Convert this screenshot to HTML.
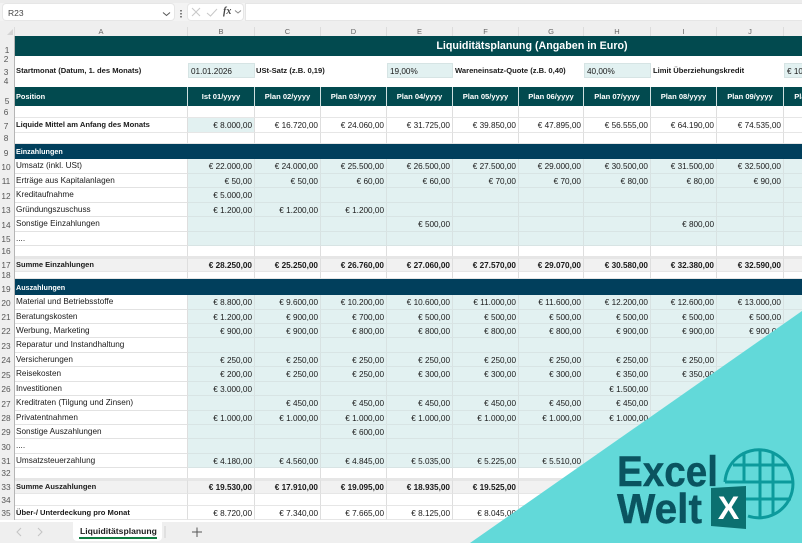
<!DOCTYPE html>
<html><head><meta charset="utf-8"><style>
html,body{margin:0;padding:0;width:802px;height:543px;overflow:hidden;background:#efefef;font-family:"Liberation Sans",sans-serif}
#w{position:absolute;left:0;top:27px;width:802px;height:495px;overflow:hidden;background:#fff}
table{border-collapse:separate;border-spacing:0;table-layout:fixed;width:851px;font-size:8.2px;color:#1a1a1a;filter:blur(.3px)}
td{padding:1px 2px 0 0;border-right:1px solid #dedede;border-bottom:1px solid #e6e6e6;box-sizing:border-box;line-height:7px;white-space:nowrap;text-align:right;vertical-align:middle;overflow:hidden}
td:first-child{background:#efefef;border-right:1px solid #b5b5b5;border-bottom:0;font-size:8.3px;color:#555;padding:0 2px 3px 0;vertical-align:bottom;text-align:center;font-weight:normal !important}
td:nth-child(2){text-align:left;padding:0 0 1px 1px;overflow:visible}
tr.h td{background:#efefef;border-right:1px solid #dcdcdc;border-bottom:0;color:#666;text-align:center;font-size:7.5px;padding:0}
tr.e td{background:#e2f1f1;border-right:1px solid #d8e2e2;border-bottom:1px solid #d8e4e4}
tr.e td:nth-child(2){background:#fff;border-bottom:1px solid #e2e2e2;border-right:1px solid #dedede}
tr.e td:first-child,tr.s td:first-child,tr.d td:first-child,tr.m td:first-child{background:#efefef;border-right:1px solid #b5b5b5;border-bottom:0;border-top:0;color:#555;font-size:8.3px}
tr.d td{background:#024a4f;color:#fff;font-weight:bold;text-align:center;border-right:1px solid #cfe0e0;border-bottom:0;padding:0;font-size:7.6px}
tr.d td:nth-child(2){text-align:left;padding-left:1px;border-right:1px solid #cfe0e0;font-size:7.4px}
tr.s td{background:#013f5c;color:#fff;font-weight:bold;border:0}
tr.s td:nth-child(2){border:0;font-size:7.2px;padding:0 0 0 1px}
tr.m td{background:#f1f1f1;font-weight:bold;border-top:2px solid #e6e6e6}
tr.m td:nth-child(2){font-size:7.5px}
td.lb{font-weight:bold;font-size:7.6px}
td.t{background:#e2f1f1 !important}
tr.r3 td{border-bottom:0;border-right:0;font-weight:bold;overflow:visible;text-align:left;padding:0 0 1px 1px;font-size:7.6px}
tr.r3 td:first-child{border-right:1px solid #b5b5b5;font-weight:normal;text-align:center;padding:0 2px 2px 0;font-size:8.3px}
tr.r3 td.t{font-weight:normal;border:1px solid #d6e4e4;padding:2px 0 0 2px;font-size:8.2px}
.a{position:absolute}
</style></head><body>
<div class="a" style="left:0;top:0;width:802px;height:3px;background:#ececec"></div>
<div class="a" style="left:0;top:3px;width:802px;height:18px;background:#f3f3f3"></div>
<div class="a" style="left:3px;top:4px;width:171px;height:16px;background:#fff;border-radius:3px;box-shadow:0 0 0 1px #e6e6e6"></div>
<div class="a" style="left:8px;top:8px;font-size:8.5px;color:#444">R23</div>
<svg class="a" style="left:160px;top:8px" width="90" height="18" fill="none">
<path d="M3 4.500L6.500 7.500L10 4.500" stroke="#555" stroke-width="1"/>
<path d="M21 2v1.500M21 5v1.500M21 8v1.500" stroke="#444" stroke-width="1.300"/>
</svg>
<div class="a" style="left:188px;top:4px;width:55px;height:16px;background:#fff;border-radius:3px;box-shadow:0 0 0 1px #e6e6e6"></div>
<svg class="a" style="left:188px;top:4px" width="56" height="16" fill="none">
<path d="M4 4L12 12M12 4L4 12" stroke="#c8c8c8" stroke-width="1"/>
<path d="M19 9L22.500 12L29 5" stroke="#c8c8c8" stroke-width="1"/>
<path d="M47 6.500L50 9L53 6.500" stroke="#888" stroke-width="1"/>
</svg>
<div class="a" style="left:223px;top:6px;font:italic bold 10px 'Liberation Serif',serif;color:#444">fx</div>
<div class="a" style="left:246px;top:4px;width:556px;height:16px;background:#fff;box-shadow:0 0 0 1px #e6e6e6"></div>
<div class="a" style="left:0;top:21px;width:802px;height:6px;background:#efefef"></div>
<div id="w"><table>
<colgroup><col style="width:15px"><col style="width:173px"><col style="width:67px"><col style="width:66px"><col style="width:66px"><col style="width:66px"><col style="width:66px"><col style="width:65px"><col style="width:67px"><col style="width:66px"><col style="width:67px"><col style="width:67px"></colgroup>
<tr class="h" style="height:9px"><td style="padding:0"></td><td style="text-align:center;padding:0">A</td><td>B</td><td>C</td><td>D</td><td>E</td><td>F</td><td>G</td><td>H</td><td>I</td><td>J</td><td></td></tr>
<tr class="d" style="height:20px"><td style="padding-bottom:2px">1</td><td colspan="11" style="background:#024a4f;text-align:left;border:0"></td></tr>
<tr class="r3" style="height:7px"><td style="padding-bottom:0">2</td><td colspan="11"></td></tr>
<tr class="r3" style="height:15px"><td>3</td><td>Startmonat (Datum, 1. des Monats)</td><td class="t">01.01.2026</td><td>USt-Satz (z.B. 0,19)</td><td></td><td class="t">19,00%</td><td style="padding-left:2px">Wareneinsatz-Quote (z.B. 0,40)</td><td></td><td class="t">40,00%</td><td style="padding-left:2px">Limit Überziehungskredit</td><td></td><td class="t">€ 10.000,00</td></tr>
<tr class="r3" style="height:9px"><td>4</td><td colspan="11"></td></tr>
<tr class="d" style="height:19px"><td style="padding-bottom:1px">5</td><td>Position</td><td>Ist 01/yyyy</td><td>Plan 02/yyyy</td><td>Plan 03/yyyy</td><td>Plan 04/yyyy</td><td>Plan 05/yyyy</td><td>Plan 06/yyyy</td><td>Plan 07/yyyy</td><td>Plan 08/yyyy</td><td>Plan 09/yyyy</td><td>Plan 10/yyyy</td></tr>
<tr style="height:12px"><td style="padding-bottom:2px">6</td><td></td><td></td><td></td><td></td><td></td><td></td><td></td><td></td><td></td><td></td><td></td></tr>
<tr style="height:15px"><td>7</td><td class="lb">Liquide Mittel am Anfang des Monats</td><td class="t">€ 8.000,00</td><td>€ 16.720,00</td><td>€ 24.060,00</td><td>€ 31.725,00</td><td>€ 39.850,00</td><td>€ 47.895,00</td><td>€ 56.555,00</td><td>€ 64.190,00</td><td>€ 74.535,00</td><td></td></tr>
<tr style="height:11px"><td style="padding-bottom:2px">8</td><td></td><td></td><td></td><td></td><td></td><td></td><td></td><td></td><td></td><td></td><td></td></tr>
<tr class="s" style="height:15px"><td style="padding-bottom:2px">9</td><td>Einzahlungen</td><td></td><td></td><td></td><td></td><td></td><td></td><td></td><td></td><td></td><td></td></tr>
<tr class="e" style="height:15px"><td>10</td><td>Umsatz (inkl. USt)</td><td>€ 22.000,00</td><td>€ 24.000,00</td><td>€ 25.500,00</td><td>€ 26.500,00</td><td>€ 27.500,00</td><td>€ 29.000,00</td><td>€ 30.500,00</td><td>€ 31.500,00</td><td>€ 32.500,00</td><td></td></tr>
<tr class="e" style="height:14px"><td>11</td><td>Erträge aus Kapitalanlagen</td><td>€ 50,00</td><td>€ 50,00</td><td>€ 60,00</td><td>€ 60,00</td><td>€ 70,00</td><td>€ 70,00</td><td>€ 80,00</td><td>€ 80,00</td><td>€ 90,00</td><td></td></tr>
<tr class="e" style="height:15px"><td>12</td><td>Kreditaufnahme</td><td>€ 5.000,00</td><td></td><td></td><td></td><td></td><td></td><td></td><td></td><td></td><td></td></tr>
<tr class="e" style="height:14px"><td>13</td><td>Gründungszuschuss</td><td>€ 1.200,00</td><td>€ 1.200,00</td><td>€ 1.200,00</td><td></td><td></td><td></td><td></td><td></td><td></td><td></td></tr>
<tr class="e" style="height:15px"><td>14</td><td>Sonstige Einzahlungen</td><td></td><td></td><td></td><td>€ 500,00</td><td></td><td></td><td></td><td>€ 800,00</td><td></td><td></td></tr>
<tr class="e" style="height:14px"><td>15</td><td>....</td><td></td><td></td><td></td><td></td><td></td><td></td><td></td><td></td><td></td><td></td></tr>
<tr style="height:11px"><td style="padding-bottom:2px">16</td><td></td><td></td><td></td><td></td><td></td><td></td><td></td><td></td><td></td><td></td><td></td></tr>
<tr class="m" style="height:15px"><td>17</td><td>Summe Einzahlungen</td><td>€ 28.250,00</td><td>€ 25.250,00</td><td>€ 26.760,00</td><td>€ 27.060,00</td><td>€ 27.570,00</td><td>€ 29.070,00</td><td>€ 30.580,00</td><td>€ 32.380,00</td><td>€ 32.590,00</td><td></td></tr>
<tr style="height:7px"><td style="padding-bottom:0">18</td><td></td><td></td><td></td><td></td><td></td><td></td><td></td><td></td><td></td><td></td><td></td></tr>
<tr class="s" style="height:16px"><td style="padding-bottom:2px">19</td><td>Auszahlungen</td><td></td><td></td><td></td><td></td><td></td><td></td><td></td><td></td><td></td><td></td></tr>
<tr class="e" style="height:15px"><td>20</td><td>Material und Betriebsstoffe</td><td>€ 8.800,00</td><td>€ 9.600,00</td><td>€ 10.200,00</td><td>€ 10.600,00</td><td>€ 11.000,00</td><td>€ 11.600,00</td><td>€ 12.200,00</td><td>€ 12.600,00</td><td>€ 13.000,00</td><td></td></tr>
<tr class="e" style="height:14px"><td>21</td><td>Beratungskosten</td><td>€ 1.200,00</td><td>€ 900,00</td><td>€ 700,00</td><td>€ 500,00</td><td>€ 500,00</td><td>€ 500,00</td><td>€ 500,00</td><td>€ 500,00</td><td>€ 500,00</td><td></td></tr>
<tr class="e" style="height:14px"><td>22</td><td>Werbung, Marketing</td><td>€ 900,00</td><td>€ 900,00</td><td>€ 800,00</td><td>€ 800,00</td><td>€ 800,00</td><td>€ 800,00</td><td>€ 900,00</td><td>€ 900,00</td><td>€ 900,00</td><td></td></tr>
<tr class="e" style="height:15px"><td>23</td><td>Reparatur und Instandhaltung</td><td></td><td></td><td></td><td></td><td></td><td></td><td></td><td></td><td></td><td></td></tr>
<tr class="e" style="height:14px"><td>24</td><td>Versicherungen</td><td>€ 250,00</td><td>€ 250,00</td><td>€ 250,00</td><td>€ 250,00</td><td>€ 250,00</td><td>€ 250,00</td><td>€ 250,00</td><td>€ 250,00</td><td></td><td></td></tr>
<tr class="e" style="height:15px"><td>25</td><td>Reisekosten</td><td>€ 200,00</td><td>€ 250,00</td><td>€ 250,00</td><td>€ 300,00</td><td>€ 300,00</td><td>€ 300,00</td><td>€ 350,00</td><td>€ 350,00</td><td></td><td></td></tr>
<tr class="e" style="height:14px"><td>26</td><td>Investitionen</td><td>€ 3.000,00</td><td></td><td></td><td></td><td></td><td></td><td>€ 1.500,00</td><td></td><td></td><td></td></tr>
<tr class="e" style="height:15px"><td>27</td><td>Kreditraten (Tilgung und Zinsen)</td><td></td><td>€ 450,00</td><td>€ 450,00</td><td>€ 450,00</td><td>€ 450,00</td><td>€ 450,00</td><td>€ 450,00</td><td></td><td></td><td></td></tr>
<tr class="e" style="height:14px"><td>28</td><td>Privatentnahmen</td><td>€ 1.000,00</td><td>€ 1.000,00</td><td>€ 1.000,00</td><td>€ 1.000,00</td><td>€ 1.000,00</td><td>€ 1.000,00</td><td>€ 1.000,00</td><td></td><td></td><td></td></tr>
<tr class="e" style="height:14px"><td>29</td><td>Sonstige Auszahlungen</td><td></td><td></td><td>€ 600,00</td><td></td><td></td><td></td><td></td><td></td><td></td><td></td></tr>
<tr class="e" style="height:15px"><td>30</td><td>....</td><td></td><td></td><td></td><td></td><td></td><td></td><td></td><td></td><td></td><td></td></tr>
<tr class="e" style="height:14px"><td>31</td><td>Umsatzsteuerzahlung</td><td>€ 4.180,00</td><td>€ 4.560,00</td><td>€ 4.845,00</td><td>€ 5.035,00</td><td>€ 5.225,00</td><td>€ 5.510,00</td><td></td><td></td><td></td><td></td></tr>
<tr style="height:11px"><td style="padding-bottom:2px">32</td><td></td><td></td><td></td><td></td><td></td><td></td><td></td><td></td><td></td><td></td><td></td></tr>
<tr class="m" style="height:15px"><td>33</td><td>Summe Auszahlungen</td><td>€ 19.530,00</td><td>€ 17.910,00</td><td>€ 19.095,00</td><td>€ 18.935,00</td><td>€ 19.525,00</td><td></td><td></td><td></td><td></td><td></td></tr>
<tr style="height:12px"><td style="padding-bottom:2px">34</td><td></td><td></td><td></td><td></td><td></td><td></td><td></td><td></td><td></td><td></td><td></td></tr>
<tr style="height:14px"><td>35</td><td class="lb">Über-/ Unterdeckung pro Monat</td><td>€ 8.720,00</td><td>€ 7.340,00</td><td>€ 7.665,00</td><td>€ 8.125,00</td><td>€ 8.045,00</td><td></td><td></td><td></td><td></td><td></td></tr>
</table></div>
<div class="a" style="left:328px;top:40px;width:408px;text-align:center;font-size:10.7px;font-weight:bold;color:#fff">Liquiditätsplanung (Angaben in Euro)</div>
<svg class="a" style="left:7px;top:29px" width="7" height="7"><path d="M6 0V6H0Z" fill="#d4d4d4"/></svg>
<div class="a" style="left:0;top:522px;width:802px;height:21px;background:#efefef"></div>
<div class="a" style="left:73px;top:522px;width:89px;height:19px;background:#fff;border-radius:0 0 4px 4px"></div>
<div class="a" style="left:80px;top:526px;font-size:8.6px;font-weight:bold;color:#222">Liquiditätsplanung</div>
<div class="a" style="left:79px;top:537px;width:78px;height:2px;background:#107c41"></div>
<svg class="a" style="left:0;top:522px" width="210" height="21" fill="none">
<path d="M21 6L17 10L21 14M38 6L42 10L38 14" stroke="#c4c4c4" stroke-width="1"/>
<path d="M165 4V16" stroke="#d0d0d0"/>
<path d="M192 10H202M197 5.500V15" stroke="#555" stroke-width="1"/>
</svg>
<svg class="a" style="left:0;top:0" width="802" height="543">
<path d="M470 543L802 311V543Z" fill="#62d9d9"/>
<g fill="none" stroke="#0c9a9c" stroke-width="3">
<path d="M725 482A34 34 0 1 1 748 516"/>
<path d="M725 482H793M733 465H786M746 499H791"/>
<path d="M744 452V482M760 449V517M773 452V514"/>
</g>
<path d="M711 488L746 486V529L711 526Z" fill="#0b7070"/>
<text x="728.500" y="519" text-anchor="middle" font-family="Liberation Sans" font-weight="bold" font-size="32" fill="#fff">X</text>
<text x="617" y="486" textLength="101" lengthAdjust="spacingAndGlyphs" font-family="Liberation Sans" font-weight="bold" font-size="43" fill="#0a5460" stroke="#0a5460" stroke-width=".4">Excel</text>
<text x="617" y="523" textLength="85" lengthAdjust="spacingAndGlyphs" font-family="Liberation Sans" font-weight="bold" font-size="42" fill="#0a5460" stroke="#0a5460" stroke-width=".4">Welt</text>
</svg>
</body></html>
